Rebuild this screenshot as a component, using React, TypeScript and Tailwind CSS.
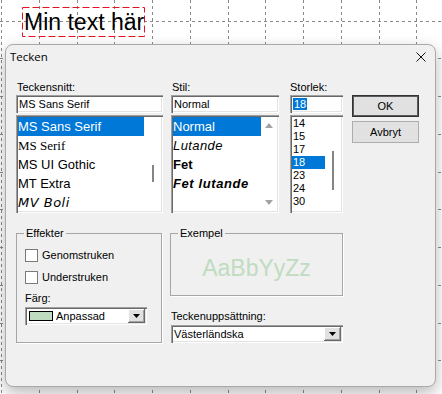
import React from "react";

const sunken =
    "bg-white shadow-[inset_1px_1px_0_#a0a0a0,inset_2px_2px_0_#696969,inset_-1px_-1px_0_#ffffff,inset_-2px_-2px_0_#e3e3e3]";
const raised =
    "bg-[#e1e1e1] shadow-[inset_-1px_-1px_0_#696969,inset_1px_1px_0_#ffffff,inset_-2px_-2px_0_#a0a0a0]";

const GridCanvas = () => {
    const xs = Array.from({length: 12}, (_, i) => Math.round(1 + i * 37.75) + 0.5);
    const ys = Array.from({length: 10}, (_, i) => Math.round(20.5 + i * 37.75) + 0.5);
    return (
        <svg className="absolute inset-0" width="442" height="394">
            {xs.map((x) => (
                <line key={"x" + x} x1={x} y1={0} x2={x} y2={394} stroke="#8a8a8a" strokeDasharray="3 3"/>
            ))}
            {ys.map((y) => (
                <line key={"y" + y} x1={0} y1={y} x2={442} y2={y} stroke="#8a8a8a" strokeDasharray="3 3"/>
            ))}
        </svg>
    );
};

const DropButton = () => (
    <div className={`w-[17px] h-[14px] flex items-center justify-center ${raised}`}>
        <svg width="7" height="4" viewBox="0 0 7 4">
            <path d="M0 0h7L3.5 4z" fill="#000"/>
        </svg>
    </div>
);

const Arrow = ({up}: { up?: boolean }) => (
    <svg width="8" height="5" viewBox="0 0 8 5">
        <path d={up ? "M0 5h8L4 0z" : "M0 0h8L4 5z"} fill="#a3a3a3"/>
    </svg>
);

const GroupBox = ({title, className, children}: { title: string, className: string, children?: React.ReactNode }) => (
    <div className={`relative border border-[#a6a6a6] shadow-[1px_1px_0_#ffffff] ${className}`}>
        <span className="absolute -top-[8px] left-[7px] px-[2px] bg-[#f0f0f0] leading-[14px]">{title}</span>
        {children}
    </div>
);

const CheckRow = ({label}: { label: string }) => (
    <div className="flex items-center h-[13px]">
        <div className="w-[13px] h-[13px] border border-[#7a7a7a] bg-white"/>
        <span className="ml-[4px] leading-[13px]">{label}</span>
    </div>
);

const fonts = [
    {name: "MS Sans Serif", cls: "font-['Liberation_Sans',sans-serif]"},
    {name: "MS Serif", cls: "font-['Liberation_Serif',serif]"},
    {name: "MS UI Gothic", cls: "font-['Liberation_Sans',sans-serif]"},
    {name: "MT Extra", cls: "font-['Liberation_Sans',sans-serif]"},
    {name: "MV Boli", cls: "font-['DejaVu_Sans',sans-serif] italic tracking-[0.5px]"},
];

const styles = [
    {name: "Normal", cls: ""},
    {name: "Lutande", cls: "italic font-light tracking-[0.4px]"},
    {name: "Fet", cls: "font-bold"},
    {name: "Fet lutande", cls: "font-bold italic tracking-[0.6px]"},
];

const sizes = ["14", "15", "17", "18", "23", "24", "30"];

export default function App() {
    return (
        <div className="relative w-[442px] h-[394px] overflow-hidden bg-white font-['Liberation_Sans',Arial,sans-serif] text-black">
            <GridCanvas/>

            <div className="absolute left-[22px] top-[7px] w-[123px] h-[30px] flex items-center pl-[2px]">
                <svg className="absolute inset-0" width="123" height="30">
                    <rect x="0.5" y="0.5" width="122" height="29" fill="none" stroke="#e81123" strokeDasharray="7 3"/>
                </svg>
                <span className="relative text-[23px] leading-none whitespace-nowrap">Min text här</span>
            </div>

            <div className="absolute left-[5px] top-[44px] w-[431px] h-[343px] rounded-[8px] border border-[#a9a9a9] bg-[#f0f0f0] shadow-[0_6px_16px_rgba(0,0,0,0.28)] flex flex-col text-[11px]">
                <div className="h-[24px] flex items-center justify-between pl-[4px] pr-[9px]">
                    <span className="font-['Open_Sans',sans-serif] text-[11.5px]">Tecken</span>
                    <svg width="10" height="10" viewBox="0 0 10 10">
                        <path d="M0.5 0.5l9 9M9.5 0.5l-9 9" stroke="#111" strokeWidth="1"/>
                    </svg>
                </div>

                <div className="pl-[10px] pt-[12px] flex flex-col">
                    <div className="flex items-start">
                        <div className="w-[147px] flex flex-col">
                            <span className="h-[13px] leading-[13px] pl-[1px] mb-[1px]">Teckensnitt:</span>
                            <div className={`h-[18px] flex items-center pl-[3px] ${sunken}`}>MS Sans Serif</div>
                            <div className={`mt-[2px] h-[98px] p-[2px] flex ${sunken}`}>
                                <div className="flex-1 flex flex-col text-[13px]">
                                    {fonts.map((f, i) => (
                                        <div key={f.name}
                                             className={`h-[19px] flex items-center whitespace-nowrap ${f.cls} ${i === 0 ? "bg-[#0078d7] text-white" : ""}`}>
                                            {f.name}
                                        </div>
                                    ))}
                                </div>
                                <div className="w-[17px] flex justify-center pt-[48px]">
                                    <div className="w-[2px] h-[17px] bg-[#858585]"/>
                                </div>
                            </div>
                        </div>

                        <div className="ml-[8px] w-[108px] flex flex-col">
                            <span className="h-[13px] leading-[13px] pl-[1px] mb-[1px]">Stil:</span>
                            <div className={`h-[18px] flex items-center pl-[3px] ${sunken}`}>Normal</div>
                            <div className={`mt-[2px] h-[98px] p-[2px] flex ${sunken}`}>
                                <div className="flex-1 flex flex-col text-[13px]">
                                    {styles.map((s, i) => (
                                        <div key={s.name}
                                             className={`h-[19px] flex items-center whitespace-nowrap ${s.cls} ${i === 0 ? "bg-[#0078d7] text-white" : ""}`}>
                                            {s.name}
                                        </div>
                                    ))}
                                </div>
                                <div className="w-[16px] flex flex-col items-center justify-between pt-[6px] pb-[6px]">
                                    <Arrow up/>
                                    <Arrow/>
                                </div>
                            </div>
                        </div>

                        <div className="ml-[11px] w-[53px] flex flex-col">
                            <span className="h-[13px] leading-[13px] mb-[1px]">Storlek:</span>
                            <div className={`h-[18px] flex items-center pl-[3px] ${sunken}`}>
                                <span className="bg-[#0078d7] text-white leading-[12px] px-[1px]">18</span>
                            </div>
                            <div className={`mt-[2px] h-[98px] p-[2px] flex ${sunken}`}>
                                <div className="flex-1 flex flex-col text-[11px]">
                                    {sizes.map((s) => (
                                        <div key={s}
                                             className={`h-[13px] leading-[13px] pl-[1px] ${s === "18" ? "bg-[#0078d7] text-white" : ""}`}>
                                            {s}
                                        </div>
                                    ))}
                                </div>
                                <div className="w-[16px] flex justify-center pt-[34px]">
                                    <div className="w-[2px] h-[39px] bg-[#858585]"/>
                                </div>
                            </div>
                        </div>

                        <div className="ml-[9px] w-[67px] pt-[14px] flex flex-col gap-[4px]">
                            <button className="h-[22px] bg-[#e1e1e1] border border-[#333333] shadow-[inset_0_0_0_1px_#5a5a5a]">OK</button>
                            <button className="h-[22px] bg-[#e1e1e1] border border-[#adadad]">Avbryt</button>
                        </div>
                    </div>

                    <div className="mt-[20px] flex items-start">
                        <GroupBox title="Effekter" className="w-[146px] h-[110px] pt-[15px] pl-[8px] flex flex-col">
                            <CheckRow label="Genomstruken"/>
                            <div className="mt-[9px]"><CheckRow label="Understruken"/></div>
                            <span className="mt-[8px] h-[13px] leading-[13px]">Färg:</span>
                            <div className={`mt-[2px] w-[122px] h-[18px] flex items-center pl-[4px] pr-[2px] ${sunken}`}>
                                <div className="w-[24px] h-[10px] border border-black bg-[#c0dcc0]"/>
                                <span className="ml-[3px] flex-1">Anpassad</span>
                                <DropButton/>
                            </div>
                        </GroupBox>

                        <div className="ml-[8px] flex flex-col">
                            <GroupBox title="Exempel" className="w-[173px] h-[63px] pt-[8px] flex items-center justify-center">
                                <span className="text-[23px] leading-none text-[#c0dcc0]">AaBbYyZz</span>
                            </GroupBox>
                            <span className="mt-[14px] ml-[1px] h-[13px] leading-[13px]">Teckenuppsättning:</span>
                            <div className={`mt-[2px] ml-[1px] w-[172px] h-[18px] flex items-center pl-[3px] pr-[2px] ${sunken}`}>
                                <span className="flex-1">Västerländska</span>
                                <DropButton/>
                            </div>
                        </div>
                    </div>
                </div>
            </div>
        </div>
    );
}
